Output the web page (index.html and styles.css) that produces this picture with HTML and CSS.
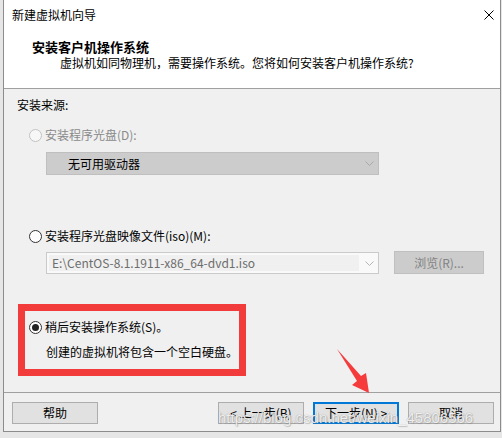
FILE: index.html
```html
<!DOCTYPE html>
<html lang="zh-CN">
<head>
<meta charset="utf-8">
<title>新建虚拟机向导</title>
<link rel="stylesheet" href="styles.css">
</head>
<body>
<div class="window">
  <div class="titlebar">
    <span class="title">新建虚拟机向导</span>
    <svg class="close" width="10" height="10" viewBox="0 0 10 10"><path d="M0.5 0.5 L9.5 9.5 M9.5 0.5 L0.5 9.5" stroke="#000" stroke-width="1" fill="none"/></svg>
  </div>
  <div class="header">
    <div class="h-title">安装客户机操作系统</div>
    <div class="h-sub">虚拟机如同物理机，需要操作系统。您将如何安装客户机操作系统?</div>
  </div>
  <div class="content">
    <div class="section-label">安装来源:</div>
    <div class="radio-row r1 disabled"><span class="radio"></span><span>安装程序光盘(D):</span></div>
    <div class="select">
      <span class="select-text">无可用驱动器</span>
      <svg class="chev" width="9" height="5" viewBox="0 0 9 5"><polyline points="0.5,0.5 4.5,4.5 8.5,0.5" stroke="#a9a9a9" fill="none"/></svg>
    </div>
    <div class="radio-row r2"><span class="radio"></span><span>安装程序光盘映像文件(iso)(M):</span></div>
    <div class="iso-row">
      <div class="combo">
        <div class="edit">E:\CentOS-8.1.1911-x86_64-dvd1.iso</div>
        <svg class="chev" width="9" height="5" viewBox="0 0 9 5"><polyline points="0.5,0.5 4.5,4.5 8.5,0.5" stroke="#b5b5b5" fill="none"/></svg>
      </div>
      <div class="browse">浏览(R)...</div>
    </div>
    <div class="radio-row r3"><span class="radio checked"></span><span>稍后安装操作系统(S)。</span></div>
    <div class="desc">创建的虚拟机将包含一个空白硬盘。</div>
  </div>
  <div class="footer">
    <div class="btn">帮助</div>
    <div class="spacer"></div>
    <div class="btn">&lt; 上一步(B)</div>
    <div class="btn default">下一步(N) &gt;</div>
    <div class="btn">取消</div>
  </div>
</div>
<div class="annot-box"></div>
<svg class="annot-arrow" width="502" height="438" viewBox="0 0 502 438">
  <polygon points="337,349 361,376 366,373 369,393 352,385 357,381" fill="#f53b3b"/>
</svg>
<div class="watermark">https://blog.csdn.net/weixin_45806566</div>
</body>
</html>
```
FILE: styles.css
```css
* { box-sizing: border-box; }
html, body { margin: 0; padding: 0; }
body {
  width: 502px;
  height: 438px;
  background: #e6e6e6;
  font-family: "Noto Sans CJK SC", "Noto Sans", sans-serif;
  font-size: 12px;
  line-height: 16px;
  color: #000;
  position: relative;
  overflow: hidden;
}
.window {
  margin-left: 3px;
  width: 498px;
  height: 432px;
  border-left: 1px solid #8c8c8c;
  border-right: 1px solid #8c8c8c;
  border-bottom: 1px solid #8c8c8c;
  display: flex;
  flex-direction: column;
  background: #f0f0f0;
}
.titlebar {
  height: 30px;
  background: #fff;
  display: flex;
  align-items: center;
  justify-content: space-between;
  padding-left: 8px;
  padding-right: 6px;
}
.title { line-height: 30px; }
.close { display: block; }
.header {
  height: 59px;
  background: #fff;
  border-bottom: 1px solid #a0a0a0;
  padding-top: 9px;
  padding-left: 28px;
}
.h-title {
  font-weight: bold;
  font-size: 13px;
  line-height: 16px;
}
.h-sub {
  margin-left: 28px;
}
.content {
  height: 304px;
  border-bottom: 1px solid #a0a0a0;
  padding-top: 8px;
  padding-left: 13px;
  display: flex;
  flex-direction: column;
}
.radio-row {
  display: flex;
  align-items: center;
  height: 16px;
  margin-left: 12px;
}
.radio {
  width: 13px;
  height: 13px;
  border: 1px solid #333;
  border-radius: 50%;
  background: #fff;
  margin-right: 3px;
  display: flex;
  align-items: center;
  justify-content: center;
}
.disabled { color: #8a8a8a; }
.disabled .radio { border-color: #c2c2c2; background: #f7f7f7; }
.radio.checked::after {
  content: "";
  width: 7px;
  height: 7px;
  border-radius: 50%;
  background: #222;
}
.r1 { margin-top: 14px; }
.r2 { margin-top: 53px; }
.r3 { margin-top: 45px; }
.select {
  margin-top: 9px;
  margin-left: 29px;
  width: 333px;
  height: 23px;
  background: #cccccc;
  border: 1px solid #bfbfbf;
  display: flex;
  align-items: center;
  justify-content: space-between;
  padding-left: 21px;
  padding-right: 4px;
}
.chev { display: block; }
.iso-row {
  margin-top: 7px;
  margin-left: 29px;
  display: flex;
  align-items: flex-start;
}
.combo {
  margin-top: 1px;
  width: 333px;
  height: 22px;
  background: #f9f9f9;
  border: 1px solid #cacaca;
  display: flex;
  align-items: center;
  justify-content: space-between;
  padding-left: 2px;
  padding-right: 4px;
}
.edit {
  width: 310px;
  height: 16px;
  background: #f0f0f0;
  color: #6d6d6d;
  padding-left: 3px;
  line-height: 16px;
  white-space: nowrap;
  overflow: hidden;
}
.browse {
  margin-left: 15px;
  width: 90px;
  height: 23px;
  background: #cccccc;
  border: 1px solid #bfbfbf;
  color: #838383;
  display: flex;
  align-items: center;
  justify-content: center;
}
.desc {
  margin-top: 9px;
  margin-left: 29px;
}
.footer {
  height: 38px;
  padding-top: 9px;
  padding-left: 8px;
  padding-right: 6px;
  display: flex;
  align-items: flex-start;
}
.spacer { flex: 1; }
.btn {
  flex: none;
  width: 86px;
  height: 22px;
  background: #e1e1e1;
  border: 1px solid #adadad;
  display: flex;
  align-items: center;
  justify-content: center;
}
.btn + .btn { margin-left: 9px; }
.btn.default {
  border: 2px solid #0078d7;
}
.annot-box {
  position: absolute;
  left: 18px;
  top: 304px;
  width: 228px;
  height: 72px;
  border: 7px solid #f23b3b;
}
.annot-arrow {
  position: absolute;
  left: 0;
  top: 0;
  pointer-events: none;
}
.watermark {
  position: absolute;
  left: 218px;
  top: 409px;
  font-family: "Liberation Sans", Arial, sans-serif;
  font-size: 15px;
  line-height: 18px;
  color: rgba(255, 255, 255, 0.85);
  text-shadow: 0 0 1px rgba(90, 90, 90, 0.6), 1px 1px 1px rgba(120, 120, 120, 0.35);
  white-space: nowrap;
  pointer-events: none;
}
```
